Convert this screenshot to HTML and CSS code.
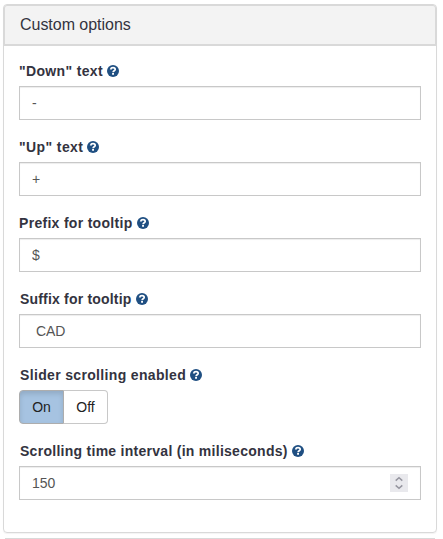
FILE: index.html
```html
<!DOCTYPE html>
<html lang="en">
<head>
<meta charset="utf-8">
<title>Custom options</title>
<link rel="stylesheet" href="styles.css">
</head>
<body>
<svg class="defs" width="0" height="0" aria-hidden="true">
  <symbol id="help" viewBox="0 0 12 12">
    <circle cx="6" cy="6" r="6" fill="#1f4f82"/>
    <path d="M3.6 4.5C3.9 3.2 4.8 2.7 6 2.7c1.3 0 2.2.7 2.2 1.7 0 1.4-2.1 1.4-2.1 2.9" fill="none" stroke="#fff" stroke-width="1.7"/>
    <path d="M5.1 8.1h1.9v1.7H5.1z" fill="#fff"/>
  </symbol>
</svg>
<section class="panel">
  <h4 class="panel-heading">Custom options</h4>
  <div class="panel-body">
    <div class="group">
      <label class="label" for="down"><span class="t-down">"Down" text</span><svg class="help"><use href="#help"/></svg></label>
      <input class="control" id="down" type="text" value="-">
    </div>
    <div class="group">
      <label class="label" for="up"><span class="t-up">"Up" text</span><svg class="help"><use href="#help"/></svg></label>
      <input class="control" id="up" type="text" value="+">
    </div>
    <div class="group">
      <label class="label" for="prefix"><span class="t-prefix">Prefix for tooltip</span><svg class="help"><use href="#help"/></svg></label>
      <input class="control" id="prefix" type="text" value="$">
    </div>
    <div class="group">
      <label class="label" for="suffix"><span class="t-suffix">Suffix for tooltip</span><svg class="help"><use href="#help"/></svg></label>
      <input class="control" id="suffix" type="text" value=" CAD">
    </div>
    <div class="group">
      <div class="label"><span class="t-slider">Slider scrolling enabled</span><svg class="help"><use href="#help"/></svg></div>
      <div class="toggle"><button class="btn active">On</button><button class="btn">Off</button></div>
    </div>
    <div class="group">
      <label class="label" for="interval"><span class="t-interval">Scrolling time interval (in miliseconds)</span><svg class="help"><use href="#help"/></svg></label>
      <div class="control number">
        <input class="number-input" id="interval" type="text" value="150">
        <svg class="spinner" viewBox="0 0 18 18"><path d="M5.7 6.6 9 3.7l3.3 2.9M5.7 11.4 9 14.3l3.3-2.9" fill="none" stroke="#95959f" stroke-width="1.5"/></svg>
      </div>
    </div>
  </div>
</section>
<div class="next"></div>
</body>
</html>
```
FILE: styles.css
```css
* { box-sizing: border-box; }
html { overflow: hidden; }
body {
  margin: 0;
  padding: 4px 6px 0 3px;
  background: #fff;
  color: #333;
  font: 14px/20px "Liberation Sans", Arial, sans-serif;
}
.defs { position: absolute; }
.panel {
  border: 1px solid #d9d9d9;
  border-radius: 4px;
  box-shadow: 0 1px 1px rgba(0, 0, 0, .05);
  margin-bottom: 5px;
}
.panel-heading {
  margin: 0;
  height: 41px;
  padding: 9px 15px;
  border: 1px solid #d9d9d9;
  border-bottom-width: 2px;
  border-radius: 3px 3px 0 0;
  background: #f3f3f3;
  color: #333340;
  font-size: 16px;
  font-weight: 400;
  letter-spacing: -.03px;
}
.panel-body { padding: 15px; }
.group { margin-bottom: 17px; }
.label {
  display: flex;
  align-items: center;
  gap: 4px;
  height: 20px;
  margin-bottom: 5px;
  color: #333340;
  font-weight: 700;
  white-space: nowrap;
}
.t-down { letter-spacing: .34px; }
.t-up { letter-spacing: .4px; }
.t-prefix { letter-spacing: .3px; }
.t-suffix { padding-left: 1px; letter-spacing: .19px; }
.t-slider { padding-left: 1px; letter-spacing: .34px; }
.t-interval { padding-left: 1px; letter-spacing: .275px; }
.help { width: 12px; height: 12px; flex: none; }
.control {
  display: block;
  width: 100%;
  height: 34px;
  padding: 6px 12px;
  border: 1px solid #c8c8c8;
  border-radius: 0;
  background: #fff;
  box-shadow: inset 0 1px 1px rgba(0, 0, 0, .075);
  color: #555;
  font: inherit;
  outline: 0;
}
.number { display: flex; align-items: center; }
.number-input {
  flex: 1;
  min-width: 0;
  padding: 0;
  border: 0;
  background: none;
  color: inherit;
  font: inherit;
}
.spinner { width: 18px; height: 18px; background: #e9e9ed; }
.toggle { display: flex; height: 34px; }
.btn {
  width: 44px;
  padding: 0;
  border: 1px solid #c8c8c8;
  border-left: 0;
  border-radius: 0 4px 4px 0;
  background: #fff;
  color: #222;
  font: inherit;
}
.btn.active {
  width: 45px;
  border: 1px solid #adadad;
  border-radius: 4px 0 0 4px;
  background: #a6c3e1;
  box-shadow: inset 0 3px 5px rgba(0, 0, 0, .125);
}
.next {
  height: 1px;
  margin: 0 2px;
  background: #d9d9d9;
}
```
